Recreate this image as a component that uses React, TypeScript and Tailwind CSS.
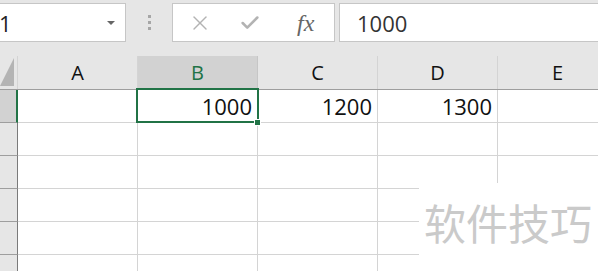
import { X, Check } from "lucide-react";

const cols = ["A", "B", "C", "D", "E"];
const rows = [
  ["", "1000", "1200", "1300", ""],
  ["", "", "", "", ""],
  ["", "", "", "", ""],
  ["", "", "", "", ""],
  ["", "", "", "", ""],
  ["", "", "", "", ""],
];

export default function App() {
  return (
    <div
      className="relative w-[598px] h-[271px] overflow-hidden bg-[#e6e6e6] text-[#222]"
      style={{ fontFamily: '"Open Sans", "Noto Sans", sans-serif' }}
    >
      {/* formula bar */}
      <div className="flex h-[56px] pt-[3px]">
        <div className="flex w-[126px] shrink-0 h-[39px] items-center justify-between bg-white border border-l-0 border-[#c6c6c6] pr-[10px]">
          <span className="text-[22px] leading-none -ml-[1px]">1</span>
          <span className="w-0 h-0 border-x-[4px] border-x-transparent border-t-[4px] border-t-[#666]" />
        </div>
        <div className="flex w-[46px] shrink-0 h-[39px] flex-col items-center justify-center gap-[3px] pl-[1px]">
          <span className="w-[3px] h-[3px] bg-[#a6a6a6]" />
          <span className="w-[3px] h-[3px] bg-[#a6a6a6]" />
          <span className="w-[3px] h-[3px] bg-[#a6a6a6]" />
        </div>
        <div className="flex w-[163px] shrink-0 h-[39px] items-center bg-white border border-[#c6c6c6]">
          <X size={24} strokeWidth={1.4} className="ml-[15px] text-[#b3b3b3]" />
          <Check size={22} strokeWidth={2.8} className="ml-[27px] text-[#b3b3b3]" />
          <span
            className="ml-[36px] text-[24px] italic text-[#666] leading-none"
            style={{ fontFamily: '"Liberation Serif", serif' }}
          >
            fx
          </span>
        </div>
        <div className="ml-[4px] flex flex-1 h-[39px] items-center bg-white border border-r-0 border-[#c6c6c6] pl-[17px]">
          <span className="text-[22px] leading-none text-[#333]">1000</span>
        </div>
      </div>

      {/* column headers */}
      <div className="flex h-[34px] border-b border-[#9e9e9e]">
        <div className="relative w-[18px] shrink-0 border-r border-[#d4d4d4]">
          <span className="absolute left-0 bottom-[3px] w-0 h-0 border-l-[14px] border-l-transparent border-b-[28px] border-b-[#b4b4b4]" />
        </div>
        {cols.map((c) => (
          <div
            key={c}
            className={
              c === "B"
                ? "flex w-[120px] shrink-0 items-center justify-center border-r border-[#c6c6c6] bg-[#d2d2d2] text-[20px] text-[#217346]"
                : "flex w-[120px] shrink-0 items-center justify-center border-r border-[#d4d4d4] text-[20px] text-[#111]"
            }
          >
            {c}
          </div>
        ))}
      </div>

      {/* grid */}
      <div className="bg-white">
        {rows.map((r, i) => (
          <div key={i} className="flex h-[33px]">
            <div
              className={
                i === 0
                  ? "w-[18px] shrink-0 bg-[#d2d2d2] border-b border-[#9e9e9e] border-r-2 border-r-[#217346]"
                  : "w-[18px] shrink-0 bg-[#e6e6e6] border-b border-[#9e9e9e] border-r border-r-[#7a7a7a]"
              }
            />
            {r.map((v, j) => (
              <div
                key={j}
                className="flex w-[120px] shrink-0 items-center justify-end border-r border-b border-[#d4d4d4] pr-[5px] text-[22px] text-[#111]"
              >
                {v}
              </div>
            ))}
          </div>
        ))}
      </div>

      {/* selected cell */}
      <div className="absolute left-[136px] top-[88px] w-[123px] h-[35px] border-2 border-[#217346]" />
      <div className="absolute left-[254px] top-[119px] w-[7px] h-[7px] bg-[#217346] border border-white" />

      {/* watermark */}
      <div className="absolute left-[419px] top-[183px] right-0 bottom-0 bg-white">
        <span
          className="absolute left-[5px] top-[18px] text-[42px] leading-none text-[#cacaca] whitespace-nowrap"
          style={{ fontFamily: '"Noto Sans CJK SC", sans-serif' }}
        >
          软件技巧
        </span>
      </div>
    </div>
  );
}
